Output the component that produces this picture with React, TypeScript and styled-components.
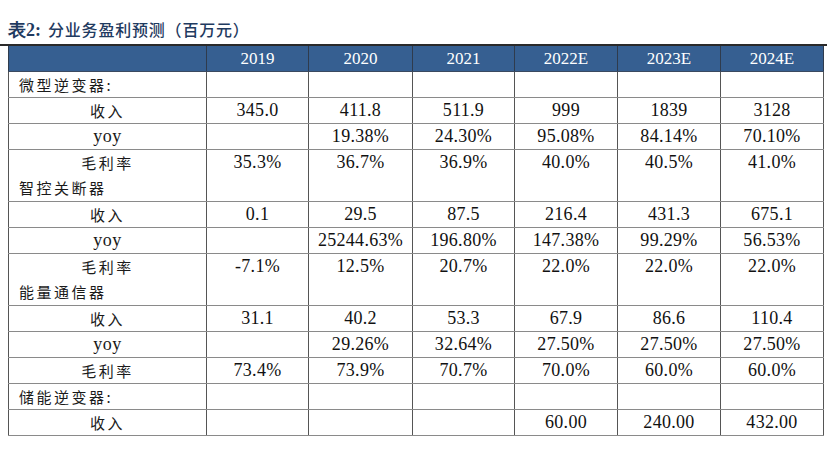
import styled, { createGlobalStyle } from 'styled-components'

const GlobalStyle = createGlobalStyle`
	body {
		margin: 0;
		background: #ffffff;
	}
`

const years = ['2019', '2020', '2021', '2022E', '2023E', '2024E']
const colWidths = [198, 102, 104, 102, 103, 103, 103]

type Row = {
	label: string
	section?: boolean
	values?: string[]
	sub?: string
}

const rows: Row[] = [
	{ label: '微型逆变器:', section: true },
	{ label: '收入', values: ['345.0', '411.8', '511.9', '999', '1839', '3128'] },
	{ label: 'yoy', values: ['', '19.38%', '24.30%', '95.08%', '84.14%', '70.10%'] },
	{ label: '毛利率', values: ['35.3%', '36.7%', '36.9%', '40.0%', '40.5%', '41.0%'], sub: '智控关断器' },
	{ label: '收入', values: ['0.1', '29.5', '87.5', '216.4', '431.3', '675.1'] },
	{ label: 'yoy', values: ['', '25244.63%', '196.80%', '147.38%', '99.29%', '56.53%'] },
	{ label: '毛利率', values: ['-7.1%', '12.5%', '20.7%', '22.0%', '22.0%', '22.0%'], sub: '能量通信器' },
	{ label: '收入', values: ['31.1', '40.2', '53.3', '67.9', '86.6', '110.4'] },
	{ label: 'yoy', values: ['', '29.26%', '32.64%', '27.50%', '27.50%', '27.50%'] },
	{ label: '毛利率', values: ['73.4%', '73.9%', '70.7%', '70.0%', '60.0%', '60.0%'] },
	{ label: '储能逆变器:', section: true },
	{ label: '收入', values: ['', '', '', '60.00', '240.00', '432.00'] },
]

export default function App() {
	return (
		<Page>
			<GlobalStyle />
			{/* Caption */}
			<Title>
				<TitleNo>表2:</TitleNo>
				<TitleText>分业务盈利预测（百万元）</TitleText>
			</Title>
			<Rule />

			{/* Table */}
			<Table>
				<colgroup>
					{colWidths.map((w, i) => (
						<col key={i} style={{ width: w }} />
					))}
				</colgroup>
				<thead>
					<tr>
						<HeadCell />
						{years.map((y) => (
							<HeadCell key={y}>{y}</HeadCell>
						))}
					</tr>
				</thead>
				<tbody>
					{rows.map((row, i) => (
						<BodyRow key={i} $tall={!!row.sub}>
							<LabelCell>
								<LabelLine $section={row.section} $latin={row.label === 'yoy'}>
									{row.label}
								</LabelLine>
								{row.sub && <LabelLine $section>{row.sub}</LabelLine>}
							</LabelCell>
							{(row.values ?? ['', '', '', '', '', '']).map((v, j) => (
								<ValueCell key={j}>{v}</ValueCell>
							))}
						</BodyRow>
					))}
				</tbody>
			</Table>
		</Page>
	)
}

const Page = styled.div`
	width: 827px;
	height: 456px;
	overflow: hidden;
	background: #ffffff;
`

const Title = styled.div`
	display: flex;
	align-items: baseline;
	gap: 7px;
	height: 44px;
	padding: 18px 0 0 8px;
	box-sizing: border-box;
	color: #1f3a60;
	line-height: 22px;
`

const TitleNo = styled.span`
	font-family: 'Liberation Serif', serif;
	font-size: 18px;
	font-weight: 700;
`

const TitleText = styled.span`
	font-family: 'Noto Sans CJK SC', sans-serif;
	font-size: 16px;
	font-weight: 500;
	letter-spacing: 0.8px;
`

const Rule = styled.div`
	height: 2px;
	background: #2a2a2a;
`

const Table = styled.table`
	margin-left: 8px;
	border-collapse: collapse;
	table-layout: fixed;
	width: 815px;
`

const HeadCell = styled.th`
	height: 25px;
	padding: 0;
	background: #365f91;
	color: #ffffff;
	font-family: 'Liberation Serif', serif;
	font-size: 17px;
	font-weight: 400;
	text-align: center;
	border-left: 1px solid #2f3b4d;
	border-right: 1px solid #2f3b4d;
	border-bottom: 1px solid #3b4a60;
`

const BodyRow = styled.tr<{ $tall?: boolean }>`
	height: ${(p) => (p.$tall ? 52 : 26)}px;
`

const LabelCell = styled.td`
	padding: 0;
	vertical-align: top;
	border: 1px solid #555555;
	border-top-color: #8a8a8a;
	border-bottom-color: #8a8a8a;
`

const LabelLine = styled.div<{ $section?: boolean; $latin?: boolean }>`
	height: 25px;
	line-height: 25px;
	padding-left: ${(p) => (p.$section ? 10 : 0)}px;
	text-align: ${(p) => (p.$section ? 'left' : 'center')};
	font-family: ${(p) =>
		p.$latin ? "'Liberation Serif', serif" : "'Noto Sans CJK SC', sans-serif"};
	font-size: ${(p) => (p.$latin ? 18 : 15)}px;
	letter-spacing: ${(p) => (p.$latin ? 0.5 : 2.5)}px;
	color: #1a1a1a;
`

const ValueCell = styled.td`
	padding: 0;
	height: 25px;
	line-height: 25px;
	vertical-align: top;
	text-align: center;
	font-family: 'Liberation Serif', serif;
	font-size: 18px;
	letter-spacing: 0.3px;
	color: #111111;
	border: 1px solid #555555;
	border-top-color: #8a8a8a;
	border-bottom-color: #8a8a8a;
`
